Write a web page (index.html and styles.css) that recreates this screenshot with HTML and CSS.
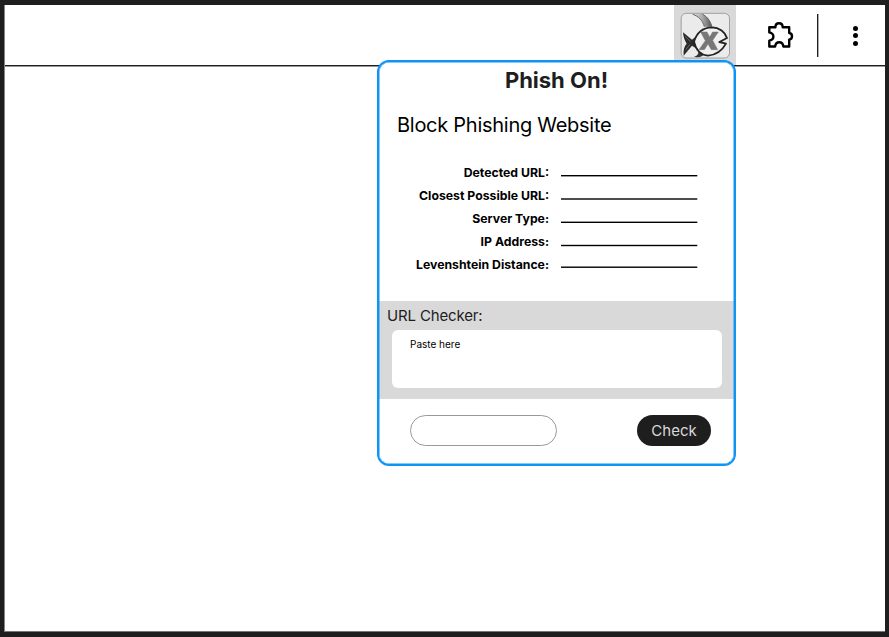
FILE: index.html
```html
<!DOCTYPE html>
<html lang="en">
<head>
<meta charset="utf-8">
<title>Phish On!</title>
<link rel="stylesheet" href="styles.css">
</head>
<body>
<div class="window">
  <header class="toolbar">
    <div class="extension">
      <svg width="62" height="60" viewBox="12 15 186 180">
        <defs>
          <linearGradient id="fin" x1="0" x2="1" y1="0" y2="0"><stop offset="0" stop-color="#ddd"/><stop offset=".5" stop-color="#aaa"/><stop offset="1" stop-color="#555"/></linearGradient>
        </defs>
        <rect x="33.500" y="40" width="145" height="134" rx="15" fill="#ebebeb" stroke="#929292" stroke-width="2.500"/>
        <path d="M68 43C84 48 98 60 103 80L126 80C122 62 112 50 97 42Z" fill="url(#fin)"/>
        <path d="M68 43C84 48 98 60 103 80M97 42C112 50 121 63 126 80" fill="none" stroke="#666" stroke-width="3"/>
        <path d="M39 97L66 119L88 101L76 129L92 154L66 137L41 167C39 150 43 138 50 131C43 120 40 110 39 97Z" fill="#2c2c2c"/>
        <path d="M45 109L61 124M47 150L60 133" stroke="#666" stroke-width="3"/>
        <path d="M84 152C87 160 84 165 72 171C91 173 101 169 104 159Z" fill="#333"/>
        <path d="M72 125C80 99 99 83 125 82C148 82 166 97 171 114L148 126L168 131C158 149 139 165 114 167C91 165 77 147 72 125Z" fill="#f0f0f0" stroke="#242424" stroke-width="5.500" stroke-linejoin="round"/>
        <path d="M92 96H111L119 111L128 96H145L128 121L143 149H124L114 132L103 149H87L106 122Z" fill="#777" stroke="#777" stroke-width="1.500"/>
      </svg>
    </div>
    <svg class="puzzle" width="32" height="32" viewBox="764 19 32 32">
      <path d="M769.300 27.200H775.400C775.400 24 777 23.200 779 23.200S782.700 24 782.700 27.200H789.200V33C791.400 33.200 792 34.500 792 36.300S791.400 39.400 789.200 39.700V46.500H783.400C783 43.800 781.500 42.300 779.200 42.300S775.500 43.800 775.100 46.500H769.300V40.700C772 40.100 773.400 38.700 773.400 36.500S772 33 769.300 32.400Z" fill="none" stroke="#000" stroke-width="2.400" stroke-linejoin="round"/>
    </svg>
    <span class="divider"></span>
    <div class="menu"><i></i><i></i><i></i></div>
  </header>
</div>
<main class="popup">
  <h1>Phish On!</h1>
  <h2>Block Phishing Website</h2>
  <dl>
    <dt>Detected URL:</dt><dd><svg width="137" height="23"><rect y="14" width="136.300" height="1.400"/></svg></dd>
    <dt>Closest Possible URL:</dt><dd><svg width="137" height="23"><rect y="14.300" width="136.300" height="1.400"/></svg></dd>
    <dt>Server Type:</dt><dd><svg width="137" height="23"><rect y="14.600" width="136.300" height="1.400"/></svg></dd>
    <dt>IP Address:</dt><dd><svg width="137" height="23"><rect y="14.800" width="136.300" height="1.400"/></svg></dd>
    <dt>Levenshtein Distance:</dt><dd><svg width="137" height="23"><rect y="13.500" width="136.300" height="1.400"/></svg></dd>
  </dl>
  <section class="checker">
    <h3>URL Checker:</h3>
    <div class="paste">Paste here</div>
  </section>
  <footer>
    <div class="result"></div>
    <button>Check</button>
  </footer>
</main>
</body>
</html>
```
FILE: styles.css
```css
* { box-sizing: border-box; }
body { margin: 0; height: 637px; overflow: hidden; position: relative; padding: 5px 4px 5px 4px; background: #1e1e1e; font-family: Inter, sans-serif; color: #000; }
.window { height: 627px; background: #fff; border-left: 1px solid #858585; border-bottom: 1px solid #777; }
.toolbar { height: 61px; display: flex; align-items: flex-start; padding-left: 669px; border-bottom: 1px solid #1e1e1e; box-shadow: 0 1px #999; }
.extension { width: 62px; height: 60px; background: #d9d9d9; }
.extension svg, .puzzle { display: block; }
.puzzle { margin: 14px 0 0 28px; }
.divider { width: 1px; height: 43px; margin: 9px 0 0 21px; background: #1e1e1e; box-shadow: 1px 0 #aaa; }
.menu { display: flex; flex-direction: column; gap: 2.600px; margin: 20.500px 0 0 35px; }
.menu i { width: 5.200px; height: 5.200px; border-radius: 50%; background: #000; }
.popup { position: absolute; left: 377px; top: 60px; width: 359px; height: 406px; border: 2px solid #0d94f5; border-radius: 12px; background: #fff; overflow: hidden; }
.popup::after { content: ""; position: absolute; inset: 0; border-radius: 10px; box-shadow: inset 0 0 0 .5px #0d94f5; pointer-events: none; }
h1, h2, h3, dl, dd { margin: 0; }
h1 { margin-top: 4px; height: 28px; line-height: 28px; text-align: center; font-size: 22px; font-weight: 700; color: #1e1e1e; }
h2 { margin: 17px 0 0 18px; height: 28px; line-height: 28px; font-size: 20px; font-weight: 400; letter-spacing: -.27px; }
dl { display: grid; grid-template-columns: 170px 137px; grid-auto-rows: 23.200px; column-gap: 12px; margin-top: 21.700px; }
dt { text-align: right; font-size: 12.250px; line-height: 23px; font-weight: 700; white-space: nowrap; }
dd svg { display: block; }
.checker { margin-top: 24.300px; height: 98px; padding: 3px 12.500px 0; background: #d9d9d9; }
h3 { margin-left: -4.500px; height: 26px; line-height: 24px; font-size: 15px; font-weight: 400; color: #1e1e1e; letter-spacing: -.15px; }
.paste { height: 58px; width: 330px; border-radius: 6px; background: #fff; padding: 7px 18.500px; line-height: 14px; font-size: 10px; }
footer { display: flex; justify-content: space-between; padding: 16px 23px 0 31px; }
.result { width: 147px; height: 31px; border: 1px solid #999; border-radius: 16px; }
button { width: 74px; height: 31px; padding: 0; border: 0; border-radius: 16px; background: #1e1e1e; color: #d9d9d9; font: 15px Inter, sans-serif; }
```
